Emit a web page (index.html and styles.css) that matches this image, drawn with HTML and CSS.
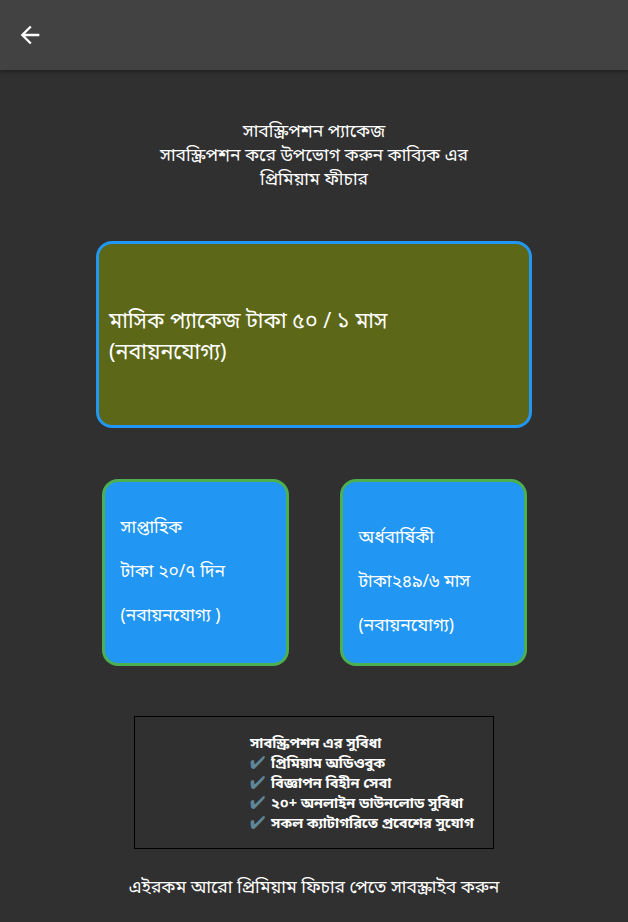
FILE: index.html
```html
<!DOCTYPE html>
<html lang="bn">
<head>
<meta charset="utf-8">
<title>সাবস্ক্রিপশন</title>
<link rel="stylesheet" href="styles.css">
</head>
<body>
<header class="appbar">
  <button class="back" aria-label="back">
    <svg width="28" height="28" viewBox="0 0 24 24"><path d="M20 11H7.83l5.59-5.59L12 4l-8 8 8 8 1.41-1.41L7.83 13H20v-2z" fill="#fff"/></svg>
  </button>
</header>
<main class="content">
  <div class="intro">
    <div>সাবস্ক্রিপশন প্যাকেজ</div>
    <div>সাবস্ক্রিপশন করে উপভোগ করুন কাব্যিক এর</div>
    <div>প্রিমিয়াম ফীচার</div>
  </div>
  <div class="card-main">
    <p>মাসিক প্যাকেজ টাকা ৫০ / ১ মাস<br>(নবায়নযোগ্য)</p>
  </div>
  <div class="row">
    <div class="card-small card-left">
      <div>সাপ্তাহিক</div>
      <div>টাকা ২০/৭ দিন</div>
      <div>(নবায়নযোগ্য )</div>
    </div>
    <div class="card-small card-right">
      <div>অর্ধবার্ষিকী</div>
      <div>টাকা২৪৯/৬ মাস</div>
      <div>(নবায়নযোগ্য)</div>
    </div>
  </div>
  <div class="features">
    <div class="feat-row">সাবস্ক্রিপশন এর সুবিধা</div>
    <div class="feat-row"><span class="check">✔</span><span>প্রিমিয়াম অডিওবুক</span></div>
    <div class="feat-row"><span class="check">✔</span><span>বিজ্ঞাপন বিহীন সেবা</span></div>
    <div class="feat-row"><span class="check">✔</span><span>২০+ অনলাইন ডাউনলোড সুবিধা</span></div>
    <div class="feat-row"><span class="check">✔</span><span>সকল ক্যাটাগরিতে প্রবেশের সুযোগ</span></div>
  </div>
  <div class="footer-text">এইরকম আরো প্রিমিয়াম ফিচার পেতে সাবস্ক্রাইব করুন</div>
</main>
</body>
</html>
```
FILE: styles.css
```css
* { box-sizing: border-box; }
html, body {
  margin: 0;
  padding: 0;
  background: #303030;
  color: #fff;
  font-family: "Noto Sans", "Noto Sans Bengali", "Lohit Bengali", sans-serif;
  height: 922px;
  overflow: hidden;
}
.appbar {
  height: 70px;
  background: #424242;
  box-shadow: 0 2px 4px rgba(0,0,0,0.35);
  display: flex;
  align-items: center;
  padding-left: 16px;
  position: relative;
  z-index: 1;
}
.back {
  background: none;
  border: 0;
  padding: 0;
  width: 28px;
  height: 28px;
  display: flex;
}
.content {
  display: flex;
  flex-direction: column;
  align-items: center;
}
.intro {
  margin-top: 48px;
  text-align: center;
  font-size: 17.5px;
  line-height: 24px;
}
.card-main {
  margin-top: 51px;
  width: 436px;
  height: 187px;
  border: 3px solid #2196f3;
  border-radius: 16px;
  background: #5d6718;
  display: flex;
  align-items: center;
  padding: 0 10px;
}
.card-main p {
  margin: 0;
  font-size: 21.5px;
  line-height: 31px;
}
.row {
  margin-top: 51px;
  display: flex;
  gap: 51px;
}
.card-small {
  width: 187px;
  height: 187px;
  border: 3px solid #4caf50;
  border-radius: 16px;
  background: #2196f3;
  padding-left: 16px;
  font-size: 17.5px;
  line-height: 44px;
}
.card-left { padding-top: 22px; }
.card-right { padding-top: 32px; }
.features {
  margin-top: 50px;
  width: 360px;
  height: 133px;
  border: 1px solid #000;
  padding: 15px 0 0 115px;
  font-size: 14.5px;
  font-weight: bold;
  line-height: 20px;
}
.feat-row {
  height: 20px;
  display: flex;
  align-items: center;
  gap: 4px;
  white-space: nowrap;
}
.check {
  color: #5f8598;
  font-weight: normal;
  font-size: 18px;
  line-height: 18px;
  width: 17px;
}
.footer-text {
  margin-top: 25px;
  font-size: 17.5px;
  line-height: 24px;
  text-align: center;
}
```
